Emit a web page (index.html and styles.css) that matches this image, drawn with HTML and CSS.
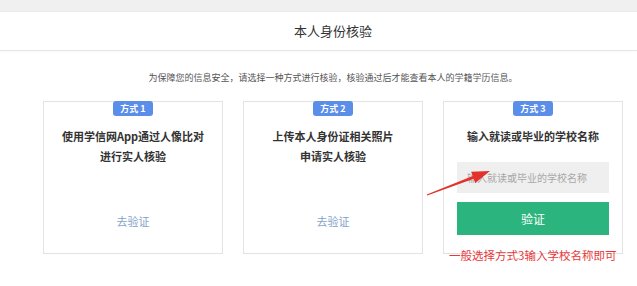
FILE: index.html
```html
<!DOCTYPE html>
<html lang="zh-CN">
<head>
    <meta charset="UTF-8">
    <meta name="viewport" content="width=device-width, initial-scale=1.0">
    <title>本人身份核验</title>
    <link rel="stylesheet" href="styles.css">
</head>
<body>
    <div class="topbar"></div>
    <div class="header">
        <div class="wrap">
            <h1>本人身份核验</h1>
        </div>
    </div>

    <div class="wrap">
        <p class="intro">为保障您的信息安全，请选择一种方式进行核验，核验通过后才能查看本人的学籍学历信息。</p>

        <div class="cards">
            <div class="card">
                <span class="badge">方式 1</span>
                <div class="card-title">使用学信网App通过人像比对<br>进行实人核验</div>
                <a class="go" href="#">去验证</a>
            </div>
            <div class="card">
                <span class="badge">方式 2</span>
                <div class="card-title">上传本人身份证相关照片<br>申请实人核验</div>
                <a class="go" href="#">去验证</a>
            </div>
            <div class="card">
                <span class="badge">方式 3</span>
                <div class="card-title">输入就读或毕业的学校名称</div>
                <input class="school" type="text" placeholder="输入就读或毕业的学校名称">
                <button class="verify" type="button">验证</button>
            </div>
        </div>
    </div>

    <!-- annotation drawn over the screenshot -->
    <svg class="arrow" width="637" height="286" viewBox="0 0 637 286">
        <polygon fill="#e3312b" points="426.8,194.6 472.7,175.9 471.1,171.8 490,171 475.3,183 473.7,178.8 427.2,195.6"/>
    </svg>
    <div class="note">一般选择方式3输入学校名称即可</div>
</body>
</html>
```

FILE: styles.css
```css
body {
    margin: 0;
    font-family: "Noto Sans CJK SC", "Noto Sans", sans-serif;
    background-color: #fff;
    color: #333;
    position: relative;
    width: 637px;
    height: 286px;
    overflow: hidden;
}
.topbar {
    height: 11px;
    background-color: #f0f0f0;
    border-bottom: 1px solid #e9e9e9;
}
.header {
    height: 38px;
    border-bottom: 1px solid #e6e6e6;
    box-shadow: 0 1px 2px rgba(0, 0, 0, 0.03);
}
.wrap {
    width: 580px;
    margin-left: 43px;
}
h1 {
    margin: 0;
    text-align: center;
    font-size: 13px;
    font-weight: normal;
    line-height: 38px;
    color: #333;
}
.intro {
    margin: 20px 0 0;
    text-align: center;
    font-size: 9px;
    line-height: 14px;
    color: #555;
}
.cards {
    display: flex;
    justify-content: space-between;
    margin-top: 16px;
}
.card {
    box-sizing: border-box;
    width: 180px;
    height: 153px;
    border: 1px solid #e3e3e3;
    display: flex;
    flex-direction: column;
    align-items: center;
}
.badge {
    margin-top: -1px;
    width: 40px;
    height: 15px;
    line-height: 15px;
    text-align: center;
    background-color: #5b8ee8;
    color: #fff;
    font-size: 9px;
    font-weight: bold;
    border-radius: 3px;
}
.card-title {
    margin-top: 10px;
    font-size: 11px;
    font-weight: bold;
    line-height: 20px;
    text-align: center;
    color: #333;
}
.go {
    margin-top: auto;
    margin-bottom: 24px;
    font-size: 11px;
    line-height: 16px;
    color: #82a2c9;
    text-decoration: none;
}
.school {
    box-sizing: border-box;
    margin-top: 16px;
    width: 152px;
    height: 31px;
    padding: 0 10px;
    border: none;
    background-color: #efefef;
    font-family: inherit;
    font-size: 10px;
    outline: none;
}
.school::placeholder {
    color: #a8a8a8;
}
.verify {
    margin-top: 9px;
    width: 152px;
    height: 33px;
    border: none;
    background-color: #2bb47e;
    color: #fff;
    font-family: inherit;
    font-size: 12px;
    cursor: pointer;
}
.arrow {
    position: absolute;
    left: 0;
    top: 0;
}
.note {
    position: absolute;
    left: 449px;
    top: 247px;
    font-size: 11.5px;
    line-height: 17px;
    color: #e8373a;
}
```
